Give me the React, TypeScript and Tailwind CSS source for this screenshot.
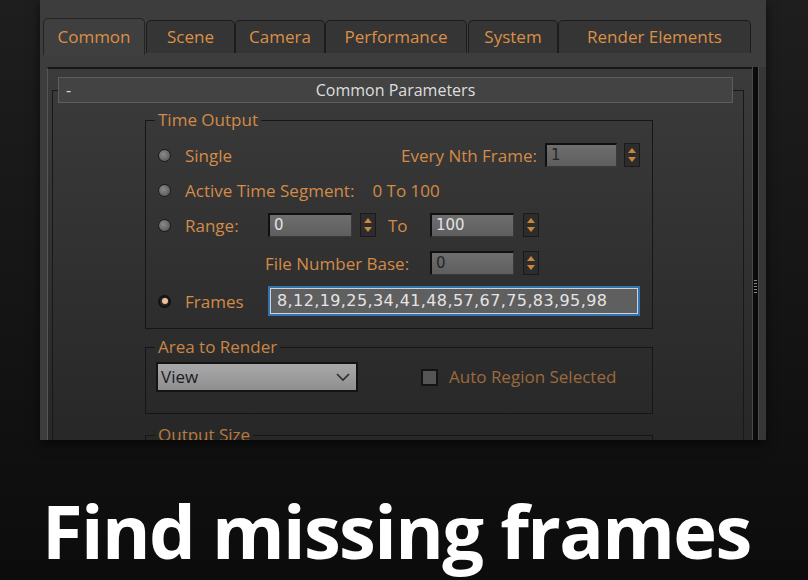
import React from "react";

const tabs = [
  { label: "Common", cls: "w-[102px] h-[37px] mt-0 bg-[#3f3f3f] border-[#242424]" },
  { label: "Scene", cls: "w-[89px] h-[33px] mt-[2px] ml-[1px] bg-[#353535] border-[#1c1c1c]" },
  { label: "Camera", cls: "w-[90px] h-[33px] mt-[2px] bg-[#353535] border-[#1c1c1c]" },
  { label: "Performance", cls: "w-[142px] h-[33px] mt-[2px] bg-[#353535] border-[#1c1c1c]" },
  { label: "System", cls: "w-[90px] h-[33px] mt-[2px] ml-[1px] bg-[#353535] border-[#1c1c1c]" },
  { label: "Render Elements", cls: "w-[193px] h-[33px] mt-[2px] bg-[#353535] border-[#1c1c1c]" },
];

function Radio({ on }: { on?: boolean }) {
  if (on) {
    return (
      <div className="ml-[12px] flex h-[13px] w-[13px] items-center justify-center rounded-full border-2 border-[#121212] bg-[#2a2a2a]">
        <div className="h-[6px] w-[6px] rounded-full bg-[#ecc29a]" />
      </div>
    );
  }
  return (
    <div className="ml-[12px] h-[13px] w-[13px] rounded-full border border-[#1a1a1a] bg-[radial-gradient(circle_at_40%_40%,#8a8a8a,#4e4e4e)]" />
  );
}

function Spinner({ cls }: { cls: string }) {
  return (
    <div className={"flex h-[24px] w-[16px] items-center justify-center border border-[#1a1a1a] bg-[#2c2c2c] " + cls}>
      <svg width="10" height="16" viewBox="0 0 10 16">
        <polygon points="5,1 9,6 1,6" fill="#c9863f" />
        <polygon points="1,10 9,10 5,15" fill="#c9863f" />
      </svg>
    </div>
  );
}

function Field({ value, cls, dark }: { value: string; cls: string; dark?: boolean }) {
  return (
    <div
      className={
        "flex h-[24px] items-center border-t-2 border-l-2 border-r border-b border-t-[#101010] border-l-[#101010] border-r-[#3a3a3a] border-b-[#3a3a3a] bg-linear-to-b from-[#6e6e6e] to-[#5e5e5e] pl-[4px] font-['DejaVu_Sans',sans-serif] text-[15px] " +
        (dark ? "text-[#262626] " : "text-[#e2e2e2] ") +
        cls
      }
    >
      {value}
    </div>
  );
}

const label = "text-[17px] text-[#d38b47] leading-none";

export default function App() {
  return (
    <div className="flex h-[580px] w-[808px] flex-col overflow-hidden bg-linear-to-b from-[#1e1e1e] via-[#151515] to-[#0c0c0c] font-['Open_Sans','Noto_Sans',sans-serif]">
      {/* window */}
      <div className="ml-[40px] flex h-[440px] w-[726px] shrink-0 flex-col overflow-hidden bg-[#3d3d3d] pt-[18px] shadow-[0_4px_10px_rgba(0,0,0,0.6)]">
        <div className="flex h-[37px] items-start pl-[3px]">
          {tabs.map((t) => (
            <div
              key={t.label}
              className={"flex items-center justify-center rounded-t-[5px] border border-b-0 text-[17px] text-[#dc8f45] " + t.cls}
            >
              {t.label}
            </div>
          ))}
        </div>

        <div className="mt-[12px] flex">
          {/* panel */}
          <div className="ml-[7px] h-[380px] w-[705px] border-t-2 border-l border-t-[#161616] border-l-[#555] bg-linear-to-b from-[#3b3b3b] to-[#272727] pt-[1px]">
            <div className="ml-[4px] mt-[20px] h-[400px] w-[692px] border-l border-t border-r border-[#181818]">
              <div className="-mt-[14px] ml-[5px] flex h-[26px] w-[675px] items-center border border-[#5e5e5e] bg-[#434343] text-[16px] text-[#dedede]">
                <span className="ml-[7px] w-[20px] leading-none">-</span>
                <span className="flex-1 pr-[27px] text-center">Common Parameters</span>
              </div>

              {/* Time Output */}
              <fieldset className="ml-[92px] mt-[6px] h-[220px] w-[508px] border border-[#161616]">
                <legend className="ml-[9px] px-[3px] text-[17px] leading-[22px] text-[#d38b47]">Time Output</legend>

                <div className="mt-[9px] flex h-[30px] items-center pr-[12px]">
                  <Radio />
                  <span className={"ml-[14px] " + label}>Single</span>
                  <div className="ml-auto flex items-center">
                    <span className={"mr-[8px] " + label}>Every Nth Frame:</span>
                    <Field value="1" cls="w-[72px]" dark />
                    <Spinner cls="ml-[7px]" />
                  </div>
                </div>

                <div className="mt-[5px] flex h-[30px] items-center">
                  <Radio />
                  <span className={"ml-[14px] " + label}>Active Time Segment:</span>
                  <span className={"ml-[18px] " + label}>0 To 100</span>
                </div>

                <div className="mt-[5px] flex h-[30px] items-center">
                  <div className="flex w-[122px] items-center">
                    <Radio />
                    <span className={"ml-[14px] " + label}>Range:</span>
                  </div>
                  <Field value="0" cls="w-[84px]" />
                  <Spinner cls="ml-[8px]" />
                  <span className={"w-[54px] pl-[12px] " + label}>To</span>
                  <Field value="100" cls="w-[84px]" />
                  <Spinner cls="ml-[9px]" />
                </div>

                <div className="mt-[8px] flex h-[30px] items-center">
                  <div className="w-[119px]" />
                  <span className={"w-[165px] " + label}>File Number Base:</span>
                  <Field value="0" cls="w-[84px]" dark />
                  <Spinner cls="ml-[9px]" />
                </div>

                <div className="mt-[8px] flex h-[30px] items-center">
                  <div className="flex w-[122px] items-center">
                    <Radio on />
                    <span className={"ml-[14px] " + label}>Frames</span>
                  </div>
                  <div className="flex h-[30px] w-[372px] items-center border-2 border-[#3473b0] bg-[#5f5f5f] pl-[7px] font-['DejaVu_Sans',sans-serif] text-[16px] tracking-[0.4px] text-[#e4e4e4] shadow-[inset_0_0_0_1px_#c9d3dc]">
                    8,12,19,25,34,41,48,57,67,75,83,95,98
                  </div>
                </div>
              </fieldset>

              {/* Area to Render */}
              <fieldset className="ml-[92px] mt-[7px] h-[78px] w-[508px] border border-[#161616]">
                <legend className="ml-[9px] px-[3px] text-[17px] leading-[22px] text-[#c98546]">Area to Render</legend>
                <div className="mt-[4px] flex items-center">
                  <div className="ml-[10px] flex h-[30px] w-[202px] items-center justify-between border-2 border-[#141414] bg-linear-to-b from-[#a9a9a9] to-[#8f8f8f] pl-[3px] pr-[6px] text-[17px] text-[#1b1b26]">
                    <span>View</span>
                    <svg width="14" height="9" viewBox="0 0 14 9">
                      <polyline points="1,1 7,7 13,1" fill="none" stroke="#2e2e2e" strokeWidth="1.6" />
                    </svg>
                  </div>
                  <div className="ml-[63px] h-[17px] w-[17px] border-2 border-[#141414] bg-[#555]" />
                  <span className="ml-[11px] text-[17px] text-[#9c6a3c]">Auto Region Selected</span>
                </div>
              </fieldset>

              {/* Output Size */}
              <fieldset className="ml-[92px] mt-[10px] h-[60px] w-[508px] border border-[#161616]">
                <legend className="ml-[9px] px-[3px] text-[17px] leading-[22px] text-[#b97a40]">Output Size</legend>
              </fieldset>
            </div>
          </div>
          {/* scrollbar channel */}
          <div className="flex h-[380px] w-[6px] flex-col items-center border-l border-[#4a4a4a] bg-[#0b0b0b]">
            <div className="mt-[213px] h-[15px] w-[3px] bg-[repeating-linear-gradient(to_bottom,#8a8a8a_0,#8a8a8a_1px,transparent_1px,transparent_3px)]" />
          </div>
          <div className="h-[380px] w-[8px] border-l border-[#4d4d4d] bg-[#363636]" />
        </div>
      </div>

      <div className="ml-[42px] mt-[53px] font-['Open_Sans',sans-serif] text-[74px] font-bold leading-[76px] tracking-[-1.6px] text-white">
        Find missing frames
      </div>
    </div>
  );
}
